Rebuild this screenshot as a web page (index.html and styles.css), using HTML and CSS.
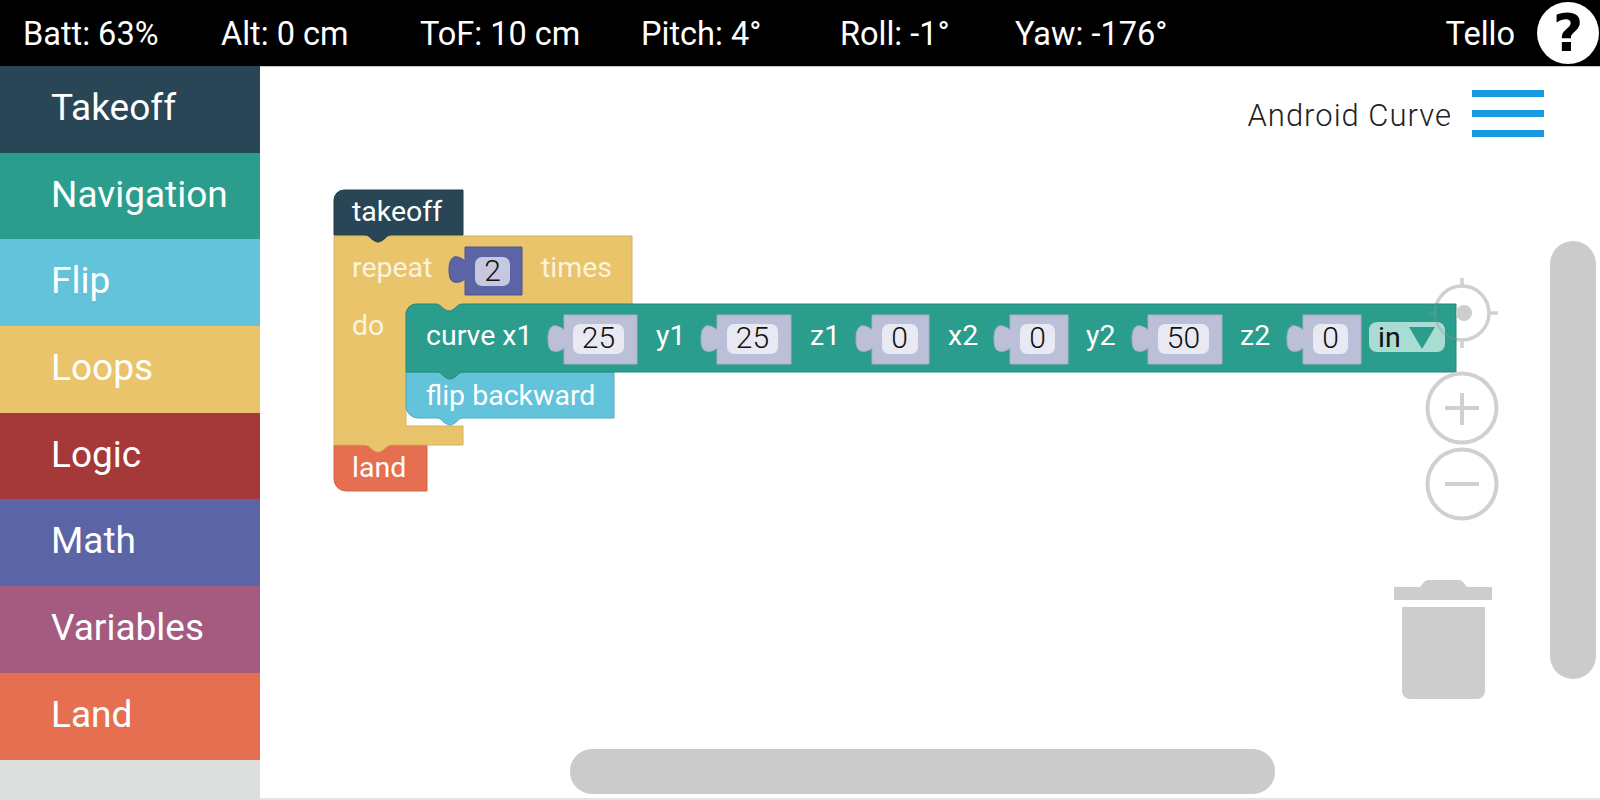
FILE: index.html
```html
<!DOCTYPE html>
<html lang="en">
<head>
<meta charset="utf-8">
<title>Tello</title>
<link rel="stylesheet" href="styles.css">
</head>
<body>
<header class="topbar">
  <span class="stat">Batt: 63%</span>
  <span class="stat">Alt: 0 cm</span>
  <span class="stat">ToF: 10 cm</span>
  <span class="stat">Pitch: 4°</span>
  <span class="stat">Roll: -1°</span>
  <span class="stat">Yaw: -176°</span>
  <span class="drone">Tello</span>
  <span class="help">?</span>
</header>
<main class="main">
  <nav class="sidebar">
    <div class="cat cat-takeoff">Takeoff</div>
    <div class="cat cat-nav">Navigation</div>
    <div class="cat cat-flip">Flip</div>
    <div class="cat cat-loops">Loops</div>
    <div class="cat cat-logic">Logic</div>
    <div class="cat cat-math">Math</div>
    <div class="cat cat-vars">Variables</div>
    <div class="cat cat-land">Land</div>
  </nav>
  <section class="workspace">
    <svg class="canvas" viewBox="260 66 1340 734" width="1340" height="734">
      <defs>
        <clipPath id="curve-clip"><rect x="1400" y="304" width="56" height="68"/></clipPath>
      </defs>
      <!-- target control, under the blocks -->
      <g class="ctl-ring">
        <circle cx="1462" cy="313" r="27"/>
        <path d="M1462 278 V287 M1462 339 V348 M1428 313 H1436 M1488 313 H1498"/>
      </g>
      <!-- land -->
      <path class="b-land" d="M334 445 H427 V491 H346 a12 12 0 0 1 -12 -12 Z"/>
      <text class="t" x="352" y="477">land</text>
      <!-- repeat -->
      <path class="b-loops" d="M334 236 H632 V304 H470 V312 H406 V426 H463 V445 H391 c-4 0 -5 3 -8 5 c-2 1 -3 2 -5 2 s-3 -1 -5 -2 c-3 -2 -4 -5 -8 -5 H334 Z"/>
      <text class="t t-cream" x="352" y="277">repeat</text>
      <text class="t t-cream" x="541" y="277">times</text>
      <text class="t t-cream" x="352" y="335">do</text>
      <path class="b-math" d="M465 247 H522 V295 H465 V279 c-3 3 -8 4 -11 3 c-4 -1 -5 -6 -5 -12 c0 -6 1 -11 5 -13 c3 -1 8 1 11 4 Z"/>
      <rect class="field-dark" x="475" y="257" width="35" height="29" rx="7"/>
      <text class="v" x="492.500" y="281">2</text>
      <!-- flip -->
      <path class="b-flip" d="M406 372 H614 V418 H463 c-4 0 -5 3 -8 5 c-2 1 -3 2 -5 2 s-3 -1 -5 -2 c-3 -2 -4 -5 -8 -5 H418 a12 12 0 0 1 -12 -12 Z"/>
      <text class="t" x="426" y="405">flip backward</text>
      <!-- curve -->
      <path class="b-nav" d="M416 304 H436 c4 0 5 3 8 5 c2 1 3 2 5 2 s3 -1 5 -2 c3 -2 4 -5 8 -5 H1456 V372 H463 c-4 0 -5 3 -8 5 c-2 1 -3 2 -5 2 s-3 -1 -5 -2 c-3 -2 -4 -5 -8 -5 H406 V314 a10 10 0 0 1 10 -10 Z"/>
      <text class="t" x="426" y="345">curve x1</text>
      <path class="val" d="M564 315 H637 V364 H564 V348 c-3 3 -8 4 -11 3 c-4 -1 -5 -6 -5 -12 c0 -6 1 -11 5 -13 c3 -1 8 1 11 4 Z"/>
      <rect class="field" x="573" y="324" width="51" height="30" rx="7"/>
      <text class="v" x="598.500" y="348">25</text>
      <text class="t" x="656" y="345">y1</text>
      <path class="val" d="M717 315 H791 V364 H717 V348 c-3 3 -8 4 -11 3 c-4 -1 -5 -6 -5 -12 c0 -6 1 -11 5 -13 c3 -1 8 1 11 4 Z"/>
      <rect class="field" x="727" y="324" width="51" height="30" rx="7"/>
      <text class="v" x="752.500" y="348">25</text>
      <text class="t" x="810" y="345">z1</text>
      <path class="val" d="M872 315 H929 V364 H872 V348 c-3 3 -8 4 -11 3 c-4 -1 -5 -6 -5 -12 c0 -6 1 -11 5 -13 c3 -1 8 1 11 4 Z"/>
      <rect class="field" x="882" y="324" width="36" height="30" rx="7"/>
      <text class="v" x="899.500" y="348">0</text>
      <text class="t" x="948" y="345">x2</text>
      <path class="val" d="M1010 315 H1068 V364 H1010 V348 c-3 3 -8 4 -11 3 c-4 -1 -5 -6 -5 -12 c0 -6 1 -11 5 -13 c3 -1 8 1 11 4 Z"/>
      <rect class="field" x="1020" y="324" width="35" height="30" rx="7"/>
      <text class="v" x="1037.500" y="348">0</text>
      <text class="t" x="1086" y="345">y2</text>
      <path class="val" d="M1148 315 H1222 V364 H1148 V348 c-3 3 -8 4 -11 3 c-4 -1 -5 -6 -5 -12 c0 -6 1 -11 5 -13 c3 -1 8 1 11 4 Z"/>
      <rect class="field" x="1158" y="324" width="51" height="30" rx="7"/>
      <text class="v" x="1183.500" y="348">50</text>
      <text class="t" x="1240" y="345">z2</text>
      <path class="val" d="M1303 315 H1361 V364 H1303 V348 c-3 3 -8 4 -11 3 c-4 -1 -5 -6 -5 -12 c0 -6 1 -11 5 -13 c3 -1 8 1 11 4 Z"/>
      <rect class="field" x="1313" y="324" width="35" height="30" rx="7"/>
      <text class="v" x="1330.500" y="348">0</text>
      <rect class="drop" x="1369" y="322" width="76" height="30" rx="8"/>
      <text class="v v-left" x="1378" y="347">in</text>
      <path class="drop-arrow" d="M1409 327 H1435 L1422 349 Z"/>
      <!-- takeoff -->
      <path class="b-takeoff" d="M344 190 H463 V235 H391 c-4 0 -5 3 -8 5 c-2 1 -3 2 -5 2 s-3 -1 -5 -2 c-3 -2 -4 -5 -8 -5 H334 V200 a10 10 0 0 1 10 -10 Z"/>
      <text class="t" x="352" y="221">takeoff</text>
      <!-- controls -->
      <g class="ctl-ghost" clip-path="url(#curve-clip)">
        <circle cx="1462" cy="313" r="27"/>
        <path d="M1428 313 H1436 M1462 339 V348"/>
      </g>
      <circle class="ctl-fill" cx="1464" cy="313" r="8"/>
      <g class="ctl">
        <circle cx="1462" cy="408" r="34.500"/>
        <path d="M1445 408 H1479 M1462 393 V425"/>
        <circle cx="1462" cy="484" r="34.500"/>
        <path d="M1445 484 H1479"/>
      </g>
      <path class="ctl-fill" d="M1394 587 H1420 l4 -5 q2 -2 4 -2 H1459 q2 0 4 2 l4 5 H1492 V600 H1394 Z"/>
      <path class="ctl-fill" d="M1402 607 H1485 V691 a8 8 0 0 1 -8 8 H1410 a8 8 0 0 1 -8 -8 Z"/>
    </svg>
    <div class="title-row">
      <span class="program">Android Curve</span>
      <span class="menu"><i></i><i></i><i></i></span>
    </div>
    <div class="scroll-v"></div>
    <div class="scroll-h"></div>
  </section>
</main>
</body>
</html>
```

FILE: styles.css
```css
* { box-sizing: border-box; }
html, body { margin: 0; height: 100%; overflow: hidden; }
body {
  width: 1600px;
  height: 800px;
  display: flex;
  flex-direction: column;
  font-family: Roboto, "Liberation Sans", sans-serif;
  background: #fff;
}
.topbar {
  height: 66px;
  flex: none;
  background: #000;
  color: #fff;
  display: grid;
  grid-template-columns: 198px 199px 221px 199px 175px 1fr auto auto;
  align-items: center;
  padding-left: 23px;
  font-size: 32.500px;
  line-height: 69px;
}
.drone { margin-right: 22px; }
.help {
  width: 62px;
  height: 62px;
  margin-right: 1px;
  margin-bottom: 4px;
  border-radius: 50%;
  background: #fff;
  color: #000;
  font-family: "DejaVu Sans", sans-serif;
  font-weight: bold;
  font-size: 52px;
  line-height: 62px;
  text-align: center;
}
.main { flex: 1; display: flex; min-height: 0; }
.sidebar {
  width: 260px;
  flex: none;
  background: #dcdddd;
  display: flex;
  flex-direction: column;
}
.cat {
  height: 86.700px;
  flex: none;
  padding-left: 51px;
  color: #fff;
  font-size: 37px;
  line-height: 84px;
}
.cat-takeoff { background: #284655; }
.cat-nav { background: #2a9d8c; }
.cat-flip { background: #62c3da; }
.cat-loops { background: #e9c46a; }
.cat-logic { background: #a53939; }
.cat-math { background: #5b64a5; }
.cat-vars { background: #a55b80; }
.cat-land { background: #e76f51; }
.workspace {
  position: relative;
  flex: 1;
  border-top: 1px solid #c4c4c4;
  border-bottom: 2px solid #e4e4e4;
  background: #fff;
}
.canvas { position: absolute; left: 0; top: -1px; display: block; }
.title-row {
  position: absolute;
  top: 19.500px;
  right: 56px;
  display: flex;
  align-items: center;
  gap: 20px;
}
.program { font-size: 31px; font-weight: 300; color: #222; letter-spacing: 1px; line-height: 50px; padding-top: 4px; }
.menu { display: flex; flex-direction: column; gap: 13px; width: 72px; }
.menu i { display: block; height: 7px; background: #1a9ae0; }
.scroll-v {
  position: absolute;
  left: 1290px;
  top: 174px;
  width: 46px;
  height: 438px;
  border-radius: 23px;
  background: #cbcbcb;
}
.scroll-h {
  position: absolute;
  left: 310px;
  top: 682px;
  width: 705px;
  height: 45px;
  border-radius: 22px;
  background: #cbcbcb;
}
.b-land { fill: #e76f51; stroke: #d2654a; }
.b-loops { fill: #e9c46a; stroke: #d4b260; }
.b-math { fill: #5b64a5; stroke: #4f578f; }
.b-flip { fill: #62c3da; stroke: #55a9bd; }
.b-nav { fill: #2a9d8c; stroke: #248879; }
.b-takeoff { fill: #284655; stroke: #223c49; }
.val { fill: #bbbfd8; stroke: #a9adc4; }
.field { fill: #e8e9f2; }
.field-dark { fill: #c5c8de; }
.drop { fill: #a9dcd2; }
.drop-arrow { fill: #2a9d8c; }
.t { font-size: 28.500px; fill: #fff; }
.t-cream { fill: #fbf3de; }
.v { font-size: 30px; font-weight: 300; fill: #111; text-anchor: middle; }
.v-left { text-anchor: start; font-weight: 400; font-size: 28.500px; }
.ctl { fill: none; stroke: #d0d0d0; stroke-width: 4; }
.ctl-ring { fill: none; stroke: #d0d0d0; stroke-width: 3.500; }
.ctl-ghost { fill: none; stroke: #8a9c98; stroke-opacity: .3; stroke-width: 3; }
.ctl-fill { fill: #cdcdcd; }
```
